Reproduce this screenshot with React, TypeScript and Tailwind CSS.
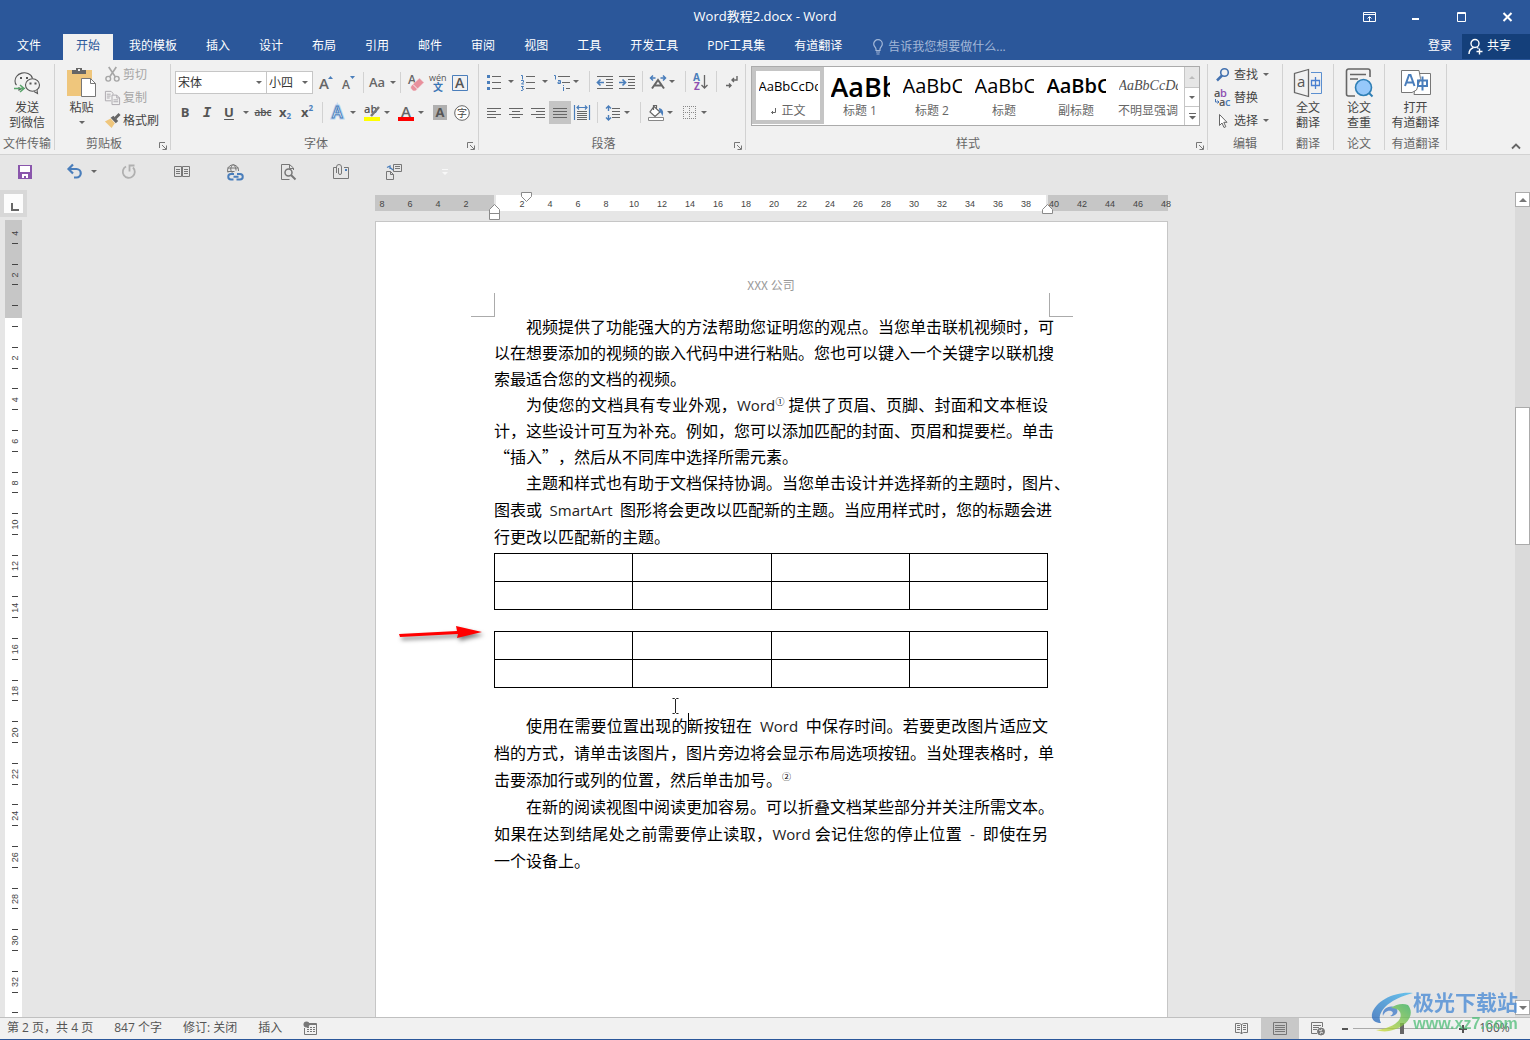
import React from 'react';
import type { ReactNode } from 'react';
import clsx from 'clsx';

const tabs = ['我的模板', '插入', '设计', '布局', '引用', '邮件', '审阅', '视图', '工具', '开发工具', 'PDF工具集', '有道翻译'];

interface StyleItem {
    name: string;
    sample: string;
    className: string;
    active?: boolean;
}

const styleItems: StyleItem[] = [
    { name: '正文', sample: 'AaBbCcDd', className: 'text-[13px] text-black', active: true },
    { name: '标题 1', sample: 'AaBbC', className: 'text-[27px] font-semibold text-black' },
    { name: '标题 2', sample: 'AaBbC', className: 'text-[20px] text-black' },
    { name: '标题', sample: 'AaBbC', className: 'text-[20px] text-black' },
    { name: '副标题', sample: 'AaBbC', className: 'text-[20px] font-semibold text-black' },
    { name: '不明显强调', sample: 'AaBbCcDd', className: "text-[14px] italic text-[#505050] font-['Liberation_Serif',serif]" },
];

const horizontalMarks = Array.from({ length: 29 }, (_, i) => Math.abs(i * 2 - 8));
const verticalMarks = Array.from({ length: 19 }, (_, i) => i * 2 - 4);

export default function App() {
    return (
        <div
            lang="zh-CN"
            className="relative flex h-screen flex-col overflow-hidden bg-[#e6e6e6] font-['Open_Sans','Noto_Sans_CJK_SC',sans-serif] text-xs text-[#444]"
        >
            <TitleBar />
            <TabBar />
            <Ribbon />
            <QuickAccess />
            <Workspace />
            <StatusBar />
            <Watermark />
        </div>
    );
}

function TitleBar() {
    return (
        <header className="grid h-[34px] shrink-0 grid-cols-[1fr_auto_1fr] items-center bg-[#2b579a] text-white">
            <span />
            <h1 className="text-[13px]">Word教程2.docx - Word</h1>
            <div className="flex justify-end">
                <WindowButton label="功能区显示选项">
                    <path d="M1.500 2.500h12v9h-12zM1.500 4.500h12M7.500 11V7M5.500 8.500l2-2 2 2" />
                </WindowButton>
                <WindowButton label="最小化">
                    <path d="M4 9h7" strokeWidth="2" />
                </WindowButton>
                <WindowButton label="最大化">
                    <path d="M3.500 2.500h8v9h-8zM3.500 3.500h8" />
                </WindowButton>
                <WindowButton label="关闭">
                    <path d="M3.500 3l8 8M11.500 3l-8 8" strokeWidth="2" />
                </WindowButton>
            </div>
        </header>
    );
}

function WindowButton({ label, children }: { label: string; children: ReactNode }) {
    return (
        <button aria-label={label} className="flex h-8 w-[46px] items-center justify-center">
            <svg width="15" height="15" fill="none" stroke="white">
                {children}
            </svg>
        </button>
    );
}

function TabBar() {
    return (
        <nav className="flex h-[26px] shrink-0 items-stretch bg-[#2b579a] text-white">
            <button className="w-[63px] pr-[5px] pb-[2px]">文件</button>
            <button className="mr-px bg-[#f1f1f1] px-[13px] pb-[2px] text-[#2b579a]">开始</button>
            <div className="ml-px flex gap-px">
                {tabs.map((tab) => (
                    <button key={tab} className="px-[14px] pb-[2px] whitespace-nowrap">
                        {tab}
                    </button>
                ))}
            </div>
            <button className="ml-4 flex items-center gap-1 text-[#a3b8d8]">
                <svg width="12" height="16" fill="none" stroke="#a3b8d8" strokeWidth="1.200">
                    <path d="M4 11.500V10C4 8.500 1.700 7.500 1.700 5a4.300 4.300 0 0 1 8.600 0C10.300 7.500 8 8.500 8 10v1.500zM4 13h4M4.500 15h3" />
                </svg>
                告诉我您想要做什么...
            </button>
            <div className="ml-auto flex">
                <button className="px-[10px] pb-[2px]">登录</button>
                <button className="mb-px flex w-[68px] items-center gap-1 bg-[#143f7a] pl-[6px]">
                    <svg width="15" height="17" fill="none" stroke="white" strokeWidth="1.400">
                        <circle cx="7" cy="5.500" r="4" />
                        <path d="M1 16c0-3.500 2-5.500 4.500-6.500M9 9.500l1.500 1M8.500 13.500h6M11.500 10.500v6" />
                    </svg>
                    <span className="pb-[2px]">共享</span>
                </button>
            </div>
        </nav>
    );
}

function Caret({ className = 'w-3 justify-center' }: { className?: string }) {
    return (
        <span className={clsx('flex shrink-0 items-center', className)}>
            <svg width="6" height="3" fill="#666">
                <path d="M0 0h6L3 3z" />
            </svg>
        </span>
    );
}

function Tool({ label, active, children }: { label: string; active?: boolean; children: ReactNode }) {
    return (
        <button
            aria-label={label}
            className={clsx(
                'flex h-[23px] w-[22px] shrink-0 items-center justify-center [&_svg]:overflow-visible',
                active && 'bg-[#c5c5c5]'
            )}
        >
            {children}
        </button>
    );
}

function Icon({ children, size = 18 }: { children: ReactNode; size?: number }) {
    return (
        <svg width={size} height={size} viewBox="0 0 18 18" fill="none" stroke="#666" className="shrink-0">
            {children}
        </svg>
    );
}

function Divider() {
    return (
        <span className="flex w-[9px] shrink-0 justify-center">
            <span className="h-[21px] w-px bg-[#d2d2d2]" />
        </span>
    );
}

interface GroupProps {
    label: string;
    className: string;
    launcher?: boolean;
    children: ReactNode;
}

function Group({ label, className, launcher, children }: GroupProps) {
    return (
        <section className={clsx('my-1 flex shrink-0 flex-col border-r border-[#d2d2d2]', className)}>
            <div className="flex-1">{children}</div>
            <div className="flex h-3 items-center justify-center text-[#666]">
                <h2 className="flex-1 text-center whitespace-nowrap">{label}</h2>
                {launcher && (
                    <button aria-label={`${label}设置`} className="flex w-[17px] justify-center pt-1 pl-[2px]">
                        <svg width="8" height="8" fill="none" stroke="#777">
                            <path d="M.5 6V.5H6M3 3l4 4M7.500 3.500v4h-4" />
                        </svg>
                    </button>
                )}
            </div>
        </section>
    );
}

function LargeButton({ lines, icon }: { lines: string[]; icon: ReactNode }) {
    return (
        <button className="flex w-full flex-col items-center pt-[3px] leading-[15px] whitespace-nowrap">
            <span className="mb-[2px] flex h-[31px] items-center">{icon}</span>
            {lines.map((line) => (
                <span key={line}>{line}</span>
            ))}
        </button>
    );
}

function SmallButton({ label, icon, caret, disabled }: { label: string; icon: ReactNode; caret?: boolean; disabled?: boolean }) {
    return (
        <button disabled={disabled} className="flex h-[23px] items-center gap-[2px] whitespace-nowrap disabled:text-[#a6a6a6]">
            {icon}
            {label}
            {caret && <Caret />}
        </button>
    );
}

function Ribbon() {
    return (
        <div className="flex h-[95px] shrink-0 border-b border-[#d2d2d2] bg-[#f1f1f1]">
            <Group label="文件传输" className="w-[55px]">
                <LargeButton lines={['发送', '到微信']} icon={<WeChatIcon />} />
            </Group>
            <Group label="剪贴板" className="w-[116px]" launcher>
                <div className="flex">
                    <button className="flex w-[49px] flex-col items-center pt-[3px] pl-1 leading-[15px]">
                        <svg width="29" height="31" className="mb-[2px]">
                            <path d="M0 3h25v26H0z" fill="#efc67c" />
                            <path d="M5 7V3h4V1h6v2h4v4z" fill="#666" />
                            <path d="M11 2h2v2h-2z" fill="#f1f1f1" />
                            <path d="M14.500 11.500h9l5 5v13h-14z" fill="white" stroke="#777" />
                            <path d="M23.500 11.500v5h5" fill="none" stroke="#777" />
                        </svg>
                        粘贴
                        <Caret className="h-[14px]" />
                    </button>
                    <div className="-mt-px flex flex-col">
                        <SmallButton label="剪切" disabled icon={<CutIcon />} />
                        <SmallButton label="复制" disabled icon={<CopyIcon />} />
                        <SmallButton label="格式刷" icon={<BrushIcon />} />
                    </div>
                </div>
            </Group>
            <Group label="字体" className="w-[308px]" launcher>
                <FontTools />
            </Group>
            <Group label="段落" className="w-[267px]" launcher>
                <ParagraphTools />
            </Group>
            <Group label="样式" className="w-[462px]" launcher>
                <StyleGallery />
            </Group>
            <Group label="编辑" className="w-[75px]">
                <div className="-mt-px flex flex-col pl-[6px]">
                    <SmallButton
                        label="查找"
                        caret
                        icon={
                            <Icon>
                                <path d="M8 9.500l-5 5" stroke="#4472b0" strokeWidth="2.500" />
                                <circle cx="10.500" cy="6.500" r="3.800" stroke="#4472b0" strokeWidth="1.600" />
                            </Icon>
                        }
                    />
                    <SmallButton
                        label="替换"
                        icon={
                            <svg width="18" height="20" fontSize="11" fontWeight="600" className="overflow-visible">
                                <text x="0" y="9" fill="#555">a</text>
                                <text x="6" y="9" fill="#8e4fb0">b</text>
                                <text x="5" y="18" fill="#555">a</text>
                                <text x="11" y="18" fill="#4a7ebb">c</text>
                                <path d="M1.500 11v3h3M3.500 12.500L5 14l-1.500 1.500" fill="none" stroke="#4472b0" />
                            </svg>
                        }
                    />
                    <SmallButton
                        label="选择"
                        caret
                        icon={
                            <Icon>
                                <path d="M5.500 2.500v11l2.500-2.500 2 4.500 1.800-.8-2-4.400H13z" fill="white" />
                            </Icon>
                        }
                    />
                </div>
            </Group>
            <Group label="翻译" className="w-[51px]">
                <LargeButton
                    lines={['全文', '翻译']}
                    icon={
                        <svg width="30" height="30" fill="none">
                            <path d="M15.500 1.500v27l-14-4v-19z" stroke="#666" strokeWidth="1.300" />
                            <path d="M18 4.500h10.500v21H18" stroke="#5b8fd0" />
                            <text x="4" y="19" fontSize="15" fill="#555">a</text>
                            <path d="M18.500 12.500h8v5h-8zM22.500 9v12" stroke="#4a7fd0" strokeWidth="1.300" />
                        </svg>
                    }
                />
            </Group>
            <Group label="论文" className="w-[51px]">
                <LargeButton
                    lines={['论文', '查重']}
                    icon={
                        <svg width="30" height="30" fill="none" stroke="#666" strokeWidth="1.600">
                            <path d="M11 28H4.500a2 2 0 0 1-2-2V3a2 2 0 0 1 2-2H24a2 2 0 0 1 2 2v6M6 6.500h16M6 11h8" />
                            <circle cx="19.500" cy="19.500" r="8" fill="#96c8fa" stroke="#2f7fb5" />
                            <path d="M25 25l3.500 3.500" stroke="#2f7fb5" strokeWidth="2" />
                        </svg>
                    }
                />
            </Group>
            <Group label="有道翻译" className="w-[62px]">
                <LargeButton
                    lines={['打开', '有道翻译']}
                    icon={
                        <svg width="30" height="26" fill="white" stroke="#777">
                            <path d="M16 3.500h13.500v21H13z" />
                            <path d="M.5.500H18l1.500 8-4 11.500L11 22.500H.5z" />
                            <path d="M4 16L8 5h1.500l4 11M5.500 12.500h6.500" fill="none" stroke="#4a7ebb" strokeWidth="2" />
                            <path d="M17 10.500h9v5.500h-9zM21.500 6.500v14" fill="none" stroke="#4a7ebb" strokeWidth="2" />
                        </svg>
                    }
                />
            </Group>
            <div className="flex flex-1 items-end justify-end px-2 pb-[3px]">
                <button aria-label="折叠功能区" className="p-px">
                    <svg width="10" height="7" fill="none" stroke="#666" strokeWidth="1.800">
                        <path d="M1 5.500l4-4 4 4" />
                    </svg>
                </button>
            </div>
        </div>
    );
}

function WeChatIcon() {
    return (
        <svg width="27" height="24" fill="none" stroke="#555" strokeWidth="1.100">
            <path d="M11 17.500l-2-.3M5 16v3l3.500-2M2.500 14C.5 12 .5 8 2.500 5.500 5 2 10 1 14 2.500c2.500 1 4 3 4.500 5" />
            <ellipse cx="18.500" cy="14" rx="7" ry="6.300" fill="#f1f1f1" />
            <path d="M20 20.500l3.500 2-.5-3.500" fill="#f1f1f1" />
            <path d="M6 7h2M12 7h2M15.500 12.500h2M20.500 12.500h2" strokeWidth="2" />
            <path d="M0 17.500h9M6 14l4 3.500L6 21" stroke="#5aa56c" strokeWidth="1.600" />
        </svg>
    );
}

function CutIcon() {
    return (
        <Icon size={17}>
            <path d="M5 1l7 10.500M13 1L6 11.500" stroke="#a6a6a6" strokeWidth="1.800" />
            <circle cx="4.500" cy="13.500" r="2.500" stroke="#a6a6a6" strokeWidth="1.500" />
            <circle cx="13.500" cy="13.500" r="2.500" stroke="#a6a6a6" strokeWidth="1.500" />
        </Icon>
    );
}

function CopyIcon() {
    return (
        <Icon size={17}>
            <g stroke="#aba8ad">
                <path d="M7.500 12.500h-6v-10h6l2 2V6M3 5.500h4M3 7.500h4M3 9.500h3" />
                <path d="M8.500 6.500h5l3 3v7h-8zM13.500 6.500v3h3M10 11.500h5M10 13.500h5" />
            </g>
        </Icon>
    );
}

function BrushIcon() {
    return (
        <Icon size={17}>
            <path d="M1 10l6-3 4.500 5L8 17z" fill="#efc67c" stroke="none" />
            <path d="M7 6l3-2 5 5.500-2.500 2.500z" fill="#666" stroke="none" />
            <path d="M12 6.500L16.500 2" strokeWidth="3" />
        </Icon>
    );
}

function FontTools() {
    return (
        <div>
            <div className="flex items-center pt-[7px] pl-1">
                <SelectBox label="字体" value="宋体" className="w-[92px]" />
                <SelectBox label="字号" value="小四" className="-ml-px w-[47px]" />
                <span className="w-[2px]" />
                <Tool label="增大字号">
                    <svg width="18" height="18" fill="#4a7ebb">
                        <text x="2" y="15" fontSize="15" fontWeight="600" fill="#666">A</text>
                        <path d="M11 5h5l-2.500-3z" />
                    </svg>
                </Tool>
                <Tool label="减小字号">
                    <svg width="18" height="18" fill="#4a7ebb">
                        <text x="3" y="15" fontSize="12" fontWeight="600" fill="#666">A</text>
                        <path d="M11 2h5l-2.500 3z" />
                    </svg>
                </Tool>
                <Divider />
                <button className="w-[18px] text-[13px] font-semibold text-[#666]">Aa</button>
                <Caret className="w-[10px] justify-end" />
                <Divider />
                <Tool label="清除格式">
                    <Icon>
                        <text x="1" y="10" fontSize="12" fontWeight="600" fill="#666" stroke="none">A</text>
                        <path d="M4 12l8.500-8L17 8.500 8.500 17H6L3.500 14z" fill="#e8909c" stroke="#f1f1f1" strokeWidth=".6" />
                        <path d="M6 10.500l4.500 4.500" stroke="#f1f1f1" />
                    </Icon>
                </Tool>
                <Tool label="拼音指南">
                    <svg width="18" height="20" fontSize="9">
                        <text x="0" y="8" fill="#555">wén</text>
                        <text x="4" y="18" fill="#3a76b5" fontWeight="700" fontSize="10">文</text>
                    </svg>
                </Tool>
                <Tool label="字符边框">
                    <svg width="16" height="16" fill="none">
                        <path d="M.5.500h15v15H.5z" stroke="#4a7ebb" />
                        <text x="3" y="13" fontSize="14" fontWeight="600" fill="#555">A</text>
                    </svg>
                </Tool>
            </div>
            <div className="flex items-center pt-[7px] pl-[3px] text-[13px] font-bold text-[#555]">
                <Tool label="加粗">B</Tool>
                <Tool label="倾斜">
                    <span className="text-sm font-['Liberation_Mono',monospace] italic">I</span>
                </Tool>
                <Tool label="下划线">
                    <span className="underline underline-offset-2">U</span>
                </Tool>
                <Caret />
                <Tool label="删除线">
                    <span className="text-[10px] font-semibold line-through">abc</span>
                </Tool>
                <Tool label="下标">
                    <span>x</span>
                    <span className="pt-2 text-[8px] text-[#4a7ebb]">2</span>
                </Tool>
                <Tool label="上标">
                    <span>x</span>
                    <span className="pb-2 text-[8px] text-[#4a7ebb]">2</span>
                </Tool>
                <Divider />
                <Tool label="文本效果">
                    <svg width="18" height="18">
                        <text x="3" y="14" fontSize="16" fontWeight="600" stroke="#b8d3f0" strokeWidth="3" fill="none">A</text>
                        <text x="3" y="14" fontSize="16" fontWeight="600" stroke="#4a7ebb" fill="white">A</text>
                    </svg>
                </Tool>
                <Caret className="w-3 pl-px" />
                <Tool label="突出显示">
                    <svg width="16" height="18">
                        <text x="0" y="9" fontSize="11" fontWeight="600" fill="#555">ab</text>
                        <path d="M7 12l8-9" stroke="#777" strokeWidth="2.500" />
                        <path d="M0 13h16v4H0z" fill="yellow" />
                    </svg>
                </Tool>
                <Caret className="w-3 pl-px" />
                <Tool label="字体颜色">
                    <svg width="16" height="18">
                        <text x="3" y="13" fontSize="15" fontWeight="600" fill="#666">A</text>
                        <path d="M0 13h16v4H0z" fill="red" />
                    </svg>
                </Tool>
                <Caret className="w-3 pl-px" />
                <Tool label="字符底纹">
                    <span className="h-[15px] w-[14px] bg-[#b0b0b0] text-center leading-[15px]">A</span>
                </Tool>
                <Tool label="带圈字符">
                    <svg width="16" height="16">
                        <circle cx="8" cy="8" r="7.300" fill="white" stroke="#666" />
                        <text x="3" y="12" fontSize="10" fontWeight="400" fill="#444">字</text>
                    </svg>
                </Tool>
            </div>
        </div>
    );
}

function SelectBox({ label, value, className }: { label: string; value: string; className: string }) {
    return (
        <span className={clsx('relative flex h-[23px] shrink-0 border border-[#c6c6c6] bg-white', className)}>
            <select aria-label={label} defaultValue={value} className="w-full appearance-none pl-[2px] text-xs text-[#333]">
                <option>{value}</option>
            </select>
            <span className="pointer-events-none absolute inset-y-0 right-1 flex">
                <Caret className="w-[6px]" />
            </span>
        </span>
    );
}

function ParagraphTools() {
    return (
        <div>
            <div className="flex items-center pt-[6px] pl-1">
                <Tool label="项目符号">
                    <Icon>
                        <path d="M7 3.500h9M7 9.500h9M7 15.500h9" />
                        <path d="M2 3.500h3M2 9.500h3M2 15.500h3" stroke="#4a7ebb" strokeWidth="3" />
                    </Icon>
                </Tool>
                <Caret />
                <Tool label="编号">
                    <Icon>
                        <path d="M7 3.500h9M7 9.500h9M7 15.500h9" />
                        <path d="M2 2.500h1.500v4M2 7.500h2.500v1.500l-2 2h2.500M2 13.500h2.500L3 15l1.500 1-1 1.500H2" stroke="#4a7ebb" />
                    </Icon>
                </Tool>
                <Caret />
                <Tool label="多级列表">
                    <Icon>
                        <path d="M5 3.500h12M9 9.500h8M13 15.500h4" />
                        <path d="M1 2.500h1.500v4M5 7.500h2.500v3H5V9h2M10.500 14v4M10.500 12v1" stroke="#4a7ebb" />
                    </Icon>
                </Tool>
                <Caret className="w-3" />
                <Divider />
                <Tool label="减少缩进">
                    <Icon>
                        <path d="M1 3.500h16M10 6.500h7M10 9.500h7M10 12.500h7M1 15.500h16" />
                        <path d="M2 9.500h6M4.500 6.500l-3 3 3 3" stroke="#4a7ebb" strokeWidth="1.700" />
                    </Icon>
                </Tool>
                <Tool label="增加缩进">
                    <Icon>
                        <path d="M1 3.500h16M10 6.500h7M10 9.500h7M10 12.500h7M1 15.500h16" />
                        <path d="M1 9.500h6M4.500 6.500l3 3-3 3" stroke="#4a7ebb" strokeWidth="1.700" />
                    </Icon>
                </Tool>
                <Divider />
                <Tool label="中文版式">
                    <Icon>
                        <path d="M3 15.500L9 7l6 8.500M5.500 12.500h7" strokeWidth="2" />
                        <path d="M1.500 5h5M4 2.500L1.500 5 4 7.500M16.500 5h-5M14 2.500L16.500 5 14 7.500" stroke="#4a7ebb" strokeWidth="1.500" />
                    </Icon>
                </Tool>
                <Caret className="w-3" />
                <Divider />
                <Tool label="排序">
                    <svg width="16" height="18" fontSize="10" fontWeight="700">
                        <text x="0" y="8" fill="#4a7ebb">A</text>
                        <text x="1" y="17" fill="#8e4fb0">Z</text>
                        <path d="M11.500 2v13M8.500 12l3 3 3-3" fill="none" stroke="#666" strokeWidth="1.300" />
                    </svg>
                </Tool>
                <Divider />
                <Tool label="显示编辑标记">
                    <Icon>
                        <path d="M14 3v4H9M11 5L9 7l2 2M3 12.500h5M6 10.500l2 2-2 2" strokeWidth="1.400" />
                    </Icon>
                </Tool>
            </div>
            <div className="flex items-center pt-2 pl-1">
                <Tool label="左对齐">
                    <Icon>
                        <path d="M2 4.500h14M2 7.500h9M2 10.500h14M2 13.500h9" />
                    </Icon>
                </Tool>
                <Tool label="居中">
                    <Icon>
                        <path d="M2 4.500h14M5 7.500h8M2 10.500h14M5 13.500h8" />
                    </Icon>
                </Tool>
                <Tool label="右对齐">
                    <Icon>
                        <path d="M2 4.500h14M7 7.500h9M2 10.500h14M7 13.500h9" />
                    </Icon>
                </Tool>
                <Tool label="两端对齐" active>
                    <Icon>
                        <path d="M2 4.500h14M2 7.500h14M2 10.500h14M2 13.500h14" />
                    </Icon>
                </Tool>
                <Tool label="分散对齐">
                    <Icon>
                        <path d="M4 7.500h10M4 9.500h10M4 11.500h10M4 13.500h10M4 15.500h10" />
                        <path d="M1.500 1v15M16.500 1v15M4 3.500h10M6 1.500l-2 2 2 2M12 1.500l2 2-2 2" stroke="#4a7ebb" strokeWidth="1.200" />
                    </Icon>
                </Tool>
                <Divider />
                <Tool label="行距">
                    <Icon>
                        <path d="M8 4.500h8M8 7.500h8M8 10.500h8M8 13.500h8" />
                        <path d="M4.500 2v5M2 4.500L4.500 2 7 4.500M4.500 11v5M2 13.500L4.500 16 7 13.500" stroke="#4a7ebb" strokeWidth="1.400" />
                    </Icon>
                </Tool>
                <Caret className="w-3" />
                <Divider />
                <Tool label="底纹">
                    <Icon>
                        <path d="M7 2.500l6 5.500-5 4.500-5-4.500zM6.500 6V1.500h3V5" fill="white" strokeWidth="1.200" />
                        <path d="M12 4c4 1 5 4 3.500 8-1-1.500-1-3-3-4z" fill="#4a7ebb" stroke="none" />
                        <path d="M1.500 13.500h15v3h-15z" fill="white" stroke="#888" />
                    </Icon>
                </Tool>
                <Caret className="w-3" />
                <Tool label="边框">
                    <Icon>
                        <path d="M2 2.500h14M2 8.500h14M2 14.500h14M2.500 2v13M8.500 2v13M14.500 2v13" stroke="#888" strokeDasharray="1 1" />
                    </Icon>
                </Tool>
                <Caret className="w-3" />
            </div>
        </div>
    );
}

function StyleGallery() {
    return (
        <div className="mt-[2px] ml-[5px] flex h-[60px] w-[449px] border border-[#ababab] bg-white">
            <div className="flex flex-1">
                {styleItems.map((item) => (
                    <button
                        key={item.name}
                        className={clsx(
                            'flex h-[57px] w-[72px] flex-col items-center border-4 whitespace-nowrap',
                            item.active ? 'border-[#c5c5c5]' : 'border-transparent'
                        )}
                    >
                        <span className={clsx('flex h-[31px] w-[59px] shrink-0 items-center overflow-hidden', item.className)}>
                            {item.sample}
                        </span>
                        <span className="flex items-center gap-1 leading-[18px] text-[#666]">
                            {item.active && (
                                <svg width="7" height="7" fill="none" stroke="#666">
                                    <path d="M5.500 0v4.500h-4M3 3L1.500 4.500 3 6" />
                                </svg>
                            )}
                            {item.name}
                        </span>
                    </button>
                ))}
            </div>
            <div className="flex w-[15px] flex-col border-l border-[#c6c6c6]">
                <button aria-label="上一行" className="flex h-5 items-center justify-center bg-[#e6e6e6]">
                    <svg width="6" height="3" fill="#bbb">
                        <path d="M0 3h6L3 0z" />
                    </svg>
                </button>
                <button aria-label="下一行" className="flex h-[19px] items-center justify-center border-t border-[#c6c6c6]">
                    <Caret />
                </button>
                <button aria-label="其他" className="flex h-[19px] items-center justify-center border-t border-[#c6c6c6]">
                    <svg width="7" height="7" fill="#666">
                        <path d="M0 0h7v1H0zM0 3h7L3.500 6.500z" />
                    </svg>
                </button>
            </div>
        </div>
    );
}

function QuickTool({ label, children }: { label: string; children: ReactNode }) {
    return (
        <button aria-label={label} className="flex w-[53px] justify-center">
            <Icon>{children}</Icon>
        </button>
    );
}

function QuickAccess() {
    return (
        <div className="flex h-[35px] shrink-0 items-center pb-[2px]">
            <button aria-label="保存" className="flex w-[50px] justify-center">
                <svg width="14" height="14">
                    <path d="M0 0h14v14H0z" fill="#8a56ac" />
                    <path d="M2 1h10v6H2zM4 9h6v4H8v-2H6v2H4z" fill="white" />
                </svg>
            </button>
            <button aria-label="撤消" className="mr-1 flex w-[34px] justify-end">
                <Icon>
                    <path d="M2.500 6h8a4.200 4.200 0 0 1 0 8.500H8M7 1.500L2.500 6 7 10.500" stroke="#4a7ebb" strokeWidth="2.200" />
                </Icon>
            </button>
            <Caret />
            <span className="w-[2px]" />
            <QuickTool label="恢复">
                <path d="M13 4.500A6 6 0 1 1 6 3.500M9.500 8.500v-6h5" stroke="#b0b0b0" strokeWidth="1.800" />
            </QuickTool>
            <QuickTool label="并排查看">
                <path d="M1.500 3.500h7v10h-7zM9.500 3.500h7v10h-7zM3 6.500h4M3 8.500h4M3 10.500h4M11 6.500h4M11 8.500h4M11 10.500h4" stroke="#777" />
            </QuickTool>
            <QuickTool label="超链接">
                <path d="M2 9.500A5.500 5.500 0 1 1 12.500 8M7 1.500c-3 3-3 6 0 9M7.500 1.500c2 2 2.500 4 2.500 6M1.500 5h11M1.500 8.500h7" stroke="#777" />
                <path d="M8 11H5a2.500 2.500 0 0 0 0 5.500h2.500M7.500 13.700h5M11 11h3a2.500 2.500 0 0 1 0 5.500h-3.500" stroke="#4a7ebb" strokeWidth="2" />
            </QuickTool>
            <QuickTool label="打印预览">
                <path d="M14.500 7V5l-4-3.500h-8v15h8M10.500 1.500v4h4" stroke="#777" />
                <circle cx="9.500" cy="9.500" r="3.500" stroke="#777" strokeWidth="1.500" />
                <path d="M12 12l4.500 4.500" stroke="#777" strokeWidth="2" />
            </QuickTool>
            <QuickTool label="电子邮件">
                <path d="M4 4.500H1.500v11h15v-11H12M4.500 10V4a2 2 0 0 1 5 0v6a1.500 1.500 0 0 1-3 0V5" stroke="#777" />
                <path d="M13 6h2v2h-2z" fill="#4a7ebb" stroke="none" />
            </QuickTool>
            <QuickTool label="粘贴链接">
                <path d="M8.500 1.500h8v7h-8zM10 3.500h5M10 5.500h5M1.500 8.500h4l3 3v5h-7zM5.500 8.500v3h3" stroke="#777" />
                <path d="M2 4.500l3-1.500v3M5 4.500L8 7" stroke="#4a7ebb" strokeWidth="1.300" />
            </QuickTool>
            <button aria-label="自定义快速访问工具栏" className="flex w-[50px] justify-center">
                <svg width="6" height="6" fill="#f8f8f8">
                    <path d="M0 0h6v1H0zM0 3h6L3 6z" />
                </svg>
            </button>
        </div>
    );
}

function Workspace() {
    return (
        <main className="flex min-h-0 flex-1">
            <div className="flex w-7 shrink-0 flex-col">
                <div className="mb-[3px] w-[27px] bg-[#d8d8d8] p-1">
                    <button aria-label="左对齐制表符" className="flex h-[19px] w-[19px] items-end justify-center bg-[#fcfcfc] pb-[2px] pl-[2px]">
                        <svg width="8" height="8" fill="none" stroke="#666" strokeWidth="2">
                            <path d="M1 0v7h7" />
                        </svg>
                    </button>
                </div>
                <VerticalRuler />
            </div>
            <div className="flex min-w-0 flex-1 flex-col items-center overflow-hidden">
                <HorizontalRuler />
                <Page />
            </div>
            <div className="flex w-[15px] shrink-0 flex-col bg-[#dadada] pb-[2px]">
                <div className="h-[2px] bg-[#e6e6e6]" />
                <ScrollButton label="向上滚动" path="M0 4h8L4 0z" />
                <span className="grow-[200]" />
                <span className="h-[138px] border border-[#ababab] bg-white" />
                <span className="grow-[455]" />
                <ScrollButton label="向下滚动" path="M0 0h8L4 4z" />
            </div>
        </main>
    );
}

function ScrollButton({ label, path }: { label: string; path: string }) {
    return (
        <button aria-label={label} className="flex h-[15px] items-center justify-center border border-[#ababab] bg-white">
            <svg width="8" height="4" fill="#777">
                <path d={path} />
            </svg>
        </button>
    );
}

function VerticalRuler() {
    const unit = 20.8;
    const zero = 96.5;

    return (
        <svg className="ml-[5px] min-h-0 w-[17px] flex-1 bg-white" fontSize="9" fill="#444" fontFamily="Liberation Sans">
            <path d="M0 0h17v98H0z" fill="#c6c6c6" />
            {verticalMarks.map((mark) => {
                const y = zero + mark * unit;
                return (
                    <g key={mark}>
                        {mark !== 0 && (
                            <text transform={`translate(13 ${y}) rotate(-90)`} textAnchor="middle">
                                {Math.abs(mark)}
                            </text>
                        )}
                        <rect x="7" y={Math.round(y + unit / 2 - 1)} width="6" height="1" />
                        <rect x="7" y={Math.round(y + unit * 1.5 - 1)} width="6" height="1" />
                    </g>
                );
            })}
        </svg>
    );
}

function HorizontalRuler() {
    return (
        <div className="relative mt-[5px] flex h-4 w-[793px] shrink-0">
            <span className="w-[119px] bg-[#c6c6c6]" />
            <span className="mx-[2px] flex-1 bg-white" />
            <span className="w-[120px] bg-[#c6c6c6]" />
            <div className="absolute inset-y-0 -left-[7px] flex items-center pt-[2px] font-['Liberation_Sans',sans-serif] text-[9px]">
                {horizontalMarks.map((mark, index) => (
                    <span key={index} className="w-7 text-center">
                        {mark !== 0 && mark}
                    </span>
                ))}
            </div>
            <svg width="11" height="16" className="absolute top-[9px] left-[114px]" fill="white" stroke="#8a8a8a">
                <path d="M.5 15.500v-10l5-5 5 5v10zM.5 9.500h10" />
            </svg>
            <svg width="11" height="10" className="absolute -top-[3px] left-[146px]" fill="white" stroke="#8a8a8a">
                <path d="M.5.500h10v4l-5 5-5-5z" />
            </svg>
            <svg width="11" height="10" className="absolute top-[9px] right-[115px]" fill="white" stroke="#8a8a8a">
                <path d="M.5 9.500v-4l5-5 5 5v4z" />
            </svg>
        </div>
    );
}

function Latin({ spaced, children }: { spaced?: boolean; children: ReactNode }) {
    return (
        <span className={clsx("font-['Open_Sans',sans-serif] text-[15px] leading-none text-[#222]", spaced && 'mx-1')}>
            {children}
        </span>
    );
}

function Note({ children }: { children: ReactNode }) {
    return <span className="relative -top-[6px] text-[9px] leading-none">{children}</span>;
}

function Line({ first, last, children }: { first?: boolean; last?: boolean; children: ReactNode }) {
    return (
        <span className={clsx('block whitespace-nowrap', first && 'pl-8', !last && '[text-align-last:justify]')}>
            {children}
        </span>
    );
}

function Grid({ className }: { className?: string }) {
    return (
        <table className={clsx('w-full table-fixed border-collapse', className)}>
            <tbody>
                {[0, 1].map((row) => (
                    <tr key={row} className="h-7">
                        {[0, 1, 2, 3].map((cell) => (
                            <td key={cell} className="border border-black" />
                        ))}
                    </tr>
                ))}
            </tbody>
        </table>
    );
}

function Page() {
    return (
        <article className="mt-[10px] min-h-0 w-[793px] flex-1 overflow-hidden border border-b-0 border-[#c6c6c6] bg-white pt-[55px] pr-[119px] pl-[118px] font-['Noto_Sans_CJK_SC',sans-serif] text-base leading-[26px] text-black [text-spacing-trim:space-all]">
            <div className="h-4 text-center text-xs leading-[16px] text-[#999]">XXX 公司</div>
            <div className="-mr-[25px] -ml-[23px] flex justify-between">
                <span className="h-6 w-6 border-r border-b border-[#ababab]" />
                <span className="h-6 w-6 border-b border-l border-[#ababab]" />
            </div>
            <div className="-mt-1">
                <p>
                    <Line first>视频提供了功能强大的方法帮助您证明您的观点。当您单击联机视频时，可</Line>
                    <Line>以在想要添加的视频的嵌入代码中进行粘贴。您也可以键入一个关键字以联机搜</Line>
                    <Line last>索最适合您的文档的视频。</Line>
                </p>
                <p>
                    <Line first>
                        为使您的文档具有专业外观，<Latin>Word</Latin>
                        <Note>①</Note> 提供了页眉、页脚、封面和文本框设
                    </Line>
                    <Line>计，这些设计可互为补充。例如，您可以添加匹配的封面、页眉和提要栏。单击</Line>
                    <Line last>“插入”，然后从不同库中选择所需元素。</Line>
                </p>
                <p className="leading-[27px]">
                    <Line first>主题和样式也有助于文档保持协调。当您单击设计并选择新的主题时，图片、</Line>
                    <Line>
                        图表或 <Latin spaced>SmartArt</Latin> 图形将会更改以匹配新的主题。当应用样式时，您的标题会进
                    </Line>
                    <Line last>行更改以匹配新的主题。</Line>
                </p>
            </div>
            <Grid className="mt-[3px]" />
            <div className="relative mt-[21px]">
                <Grid />
                <svg width="92" height="30" className="absolute -top-[10px] -left-[97px]">
                    <g className="drop-shadow-[2px_3px_2px_rgba(0,0,0,0.5)]">
                        <path d="M2 13l58-3-1-5 26 6-25 6 1-4-58 3z" fill="red" />
                    </g>
                </svg>
                <svg width="8" height="17" className="absolute top-[67px] left-[178px]" fill="none" stroke="#222">
                    <path d="M.5.500h2l1 1 1-1h2M3.500 1v14M.5 15.500h2l1-1 1 1h2" />
                </svg>
            </div>
            <div className="mt-6 leading-[27px]">
                <p>
                    <Line first>
                        使用在需要位置出现的
                        <span className="relative">
                            <span className="absolute top-0 left-0 h-5 w-px bg-black" />
                        </span>
                        新按钮在 <Latin spaced>Word</Latin> 中保存时间。若要更改图片适应文
                    </Line>
                    <Line>档的方式，请单击该图片，图片旁边将会显示布局选项按钮。当处理表格时，单</Line>
                    <Line last>
                        击要添加行或列的位置，然后单击加号。<Note>②</Note>
                    </Line>
                </p>
                <p>
                    <Line first>在新的阅读视图中阅读更加容易。可以折叠文档某些部分并关注所需文本。</Line>
                    <Line>
                        如果在达到结尾处之前需要停止读取，<Latin>Word</Latin> 会记住您的停止位置 <Latin spaced>-</Latin> 即使在另
                    </Line>
                    <Line last>一个设备上。</Line>
                </p>
            </div>
        </article>
    );
}

function StatusBar() {
    return (
        <footer className="flex h-[23px] shrink-0 items-stretch border-t border-b border-t-[#c0c0c0] border-b-[#2b579a] bg-[#f1f1f1] pl-[7px] text-[#555]">
            <div className="flex items-center gap-[21px] pb-[2px] whitespace-nowrap">
                <span>第 2 页，共 4 页</span>
                <span>847 个字</span>
                <span>修订: 关闭</span>
                <span>插入</span>
                <svg width="14" height="14" fill="none" stroke="#777">
                    <path d="M6 2.500h7.500v11h-12V7M5 3.500h8" />
                    <circle cx="3.500" cy="3.500" r="3" fill="#777" stroke="none" />
                    <path d="M4 6.500h8M4 8.500h8M4 10.500h8" strokeDasharray="2 1" />
                </svg>
            </div>
            <div className="ml-auto flex items-stretch">
                <ViewButton label="阅读视图">
                    <path d="M1.500 2.500h4l2 1 2-1h4v9h-4l-2 1-2-1h-4zM7.500 3v10M3 4.500h3M3 6.500h3M3 8.500h3M9 4.500h3M9 6.500h3M9 8.500h3" />
                </ViewButton>
                <ViewButton label="页面视图" active>
                    <path d="M1.500 1.500h13v12h-13zM3 4.500h10M3 6.500h10M3 8.500h10M3 10.500h10" />
                </ViewButton>
                <ViewButton label="Web 版式视图">
                    <path d="M7 12.500H1.500v-11h11V6M3 4.500h8M3 6.500h6M3 8.500h4" />
                    <circle cx="11" cy="10.500" r="3.500" fill="#777" />
                    <path d="M9 9l2 1 1-2M10 13l1-2 2 1" stroke="white" strokeWidth=".8" />
                </ViewButton>
                <button aria-label="缩小" className="flex w-4 items-center justify-center">
                    <span className="h-[2px] w-[6px] bg-[#555]" />
                </button>
                <input
                    type="range"
                    aria-label="显示比例"
                    defaultValue={48}
                    className="my-auto h-[11px] w-[102px] appearance-none bg-[linear-gradient(#aaa,#aaa)] bg-[length:100%_1px] bg-center bg-no-repeat [&::-webkit-slider-thumb]:h-[11px] [&::-webkit-slider-thumb]:w-1 [&::-webkit-slider-thumb]:appearance-none [&::-webkit-slider-thumb]:bg-[#666]"
                />
                <button aria-label="放大" className="flex w-4 items-center justify-center">
                    <svg width="8" height="8" stroke="#555" strokeWidth="2">
                        <path d="M0 4h8M4 0v8" />
                    </svg>
                </button>
                <button className="w-[59px] pr-3 pb-[2px] text-center">100%</button>
            </div>
        </footer>
    );
}

function ViewButton({ label, active, children }: { label: string; active?: boolean; children: ReactNode }) {
    return (
        <button aria-label={label} className={clsx('flex w-[38px] items-center justify-center', active && 'bg-[#c8c8c8]')}>
            <svg width="16" height="15" fill="none" stroke="#777">
                {children}
            </svg>
        </button>
    );
}

function Watermark() {
    return (
        <div className="pointer-events-none absolute right-[12px] bottom-[7px] flex items-center opacity-75">
            <svg width="42" height="40">
                <defs>
                    <linearGradient id="swoosh" x1="1" y1="0" x2="0" y2="1">
                        <stop offset="0" stopColor="#3db8f0" />
                        <stop offset="1" stopColor="#2462b8" />
                    </linearGradient>
                    <linearGradient id="leaf" x1="1" y1="0" x2="0" y2="1">
                        <stop offset="0" stopColor="#2fae5c" />
                        <stop offset="1" stopColor="#d8dc30" />
                    </linearGradient>
                </defs>
                <path d="M42 1C24-1 4 9 1 22c-1 6 3 9 9 9-5-8 4-23 32-30z" fill="url(#swoosh)" />
                <path d="M12 24c-2-8 8-12 13-8 4 4-1 9-6 8 3-1 4-4 1-5-4-1-7 2-8 5z" fill="#3a78c8" />
                <path d="M37 13c8 10-2 23-19 26-5 1-10 0-13-1 14-1 28-9 24-18-2-3-5-4-9-4 5-4 12-5 17-3z" fill="url(#leaf)" />
            </svg>
            <div className="flex flex-col items-center font-['Liberation_Sans','Noto_Sans_CJK_SC',sans-serif]">
                <span className="text-[21px] leading-[24px] font-bold text-[#4286d4]">极光下载站</span>
                <span className="text-[16px] leading-[18px] font-bold text-[#4fbd78]">www.xz7.com</span>
            </div>
        </div>
    );
}
